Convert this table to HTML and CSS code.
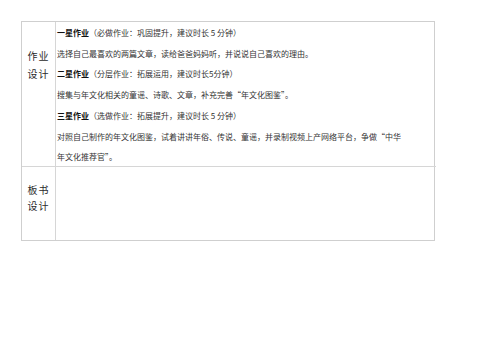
FILE: index.html
```html
<!DOCTYPE html>
<html lang="zh">
<head>
<meta charset="utf-8">
<link rel="stylesheet" href="styles.css">
</head>
<body>
<div class="page">
  <div class="table">
    <div class="label label-a"><span>作业</span><span>设计</span></div>
    <div class="content">
      <p><b>一星作业</b>（必做作业：巩固提升，建议时长 5 分钟）</p>
      <p>选择自己最喜欢的两篇文章，读给爸爸妈妈听，并说说自己喜欢的理由。</p>
      <p><b>二星作业</b>（分层作业：拓展运用，建议时长5分钟）</p>
      <p>搜集与年文化相关的童谣、诗歌、文章，补充完善“年文化图鉴”。</p>
      <p><b>三星作业</b>（选做作业：拓展提升，建议时长 5 分钟）</p>
      <p>对照自己制作的年文化图鉴，试着讲讲年俗、传说、童谣，并录制视频上产网络平台，争做“中华<br>年文化推荐官”。</p>
    </div>
    <div class="label label-b"><span>板书</span><span>设计</span></div>
    <div class="content content-b"></div>
  </div>
</div>
</body>
</html>
```
FILE: styles.css
```css
html, body {
  margin: 0;
  padding: 0;
  background: #fff;
}
.page {
  padding: 21px 0 0 21px;
  font-family: "Noto Sans CJK SC", "Noto Sans", sans-serif;
  color: #333;
}
.table {
  display: grid;
  grid-template-columns: 34px 380px;
  grid-template-rows: 144px 74px;
  width: 414px;
  border: 1px solid #cfcfcf;
  box-sizing: border-box;
}
.label {
  border-right: 1px solid #d6d6d6;
  display: flex;
  flex-direction: column;
  justify-content: flex-start;
  align-items: center;
  font-size: 10px;
  letter-spacing: 1px;
  color: #2a2a2a;
}
.label-a {
  padding-top: 25px;
  line-height: 18px;
}
.label-b {
  border-top: 1px solid #d6d6d6;
  padding-top: 15px;
  line-height: 16px;
}
.content {
  padding: 1px 0 0 1px;
  font-size: 8px;
  line-height: 20.7px;
}
.content-b {
  border-top: 1px solid #d6d6d6;
}
.content p {
  margin: 0;
  white-space: nowrap;
}
.content b {
  font-weight: 700;
  color: #111;
}
```
